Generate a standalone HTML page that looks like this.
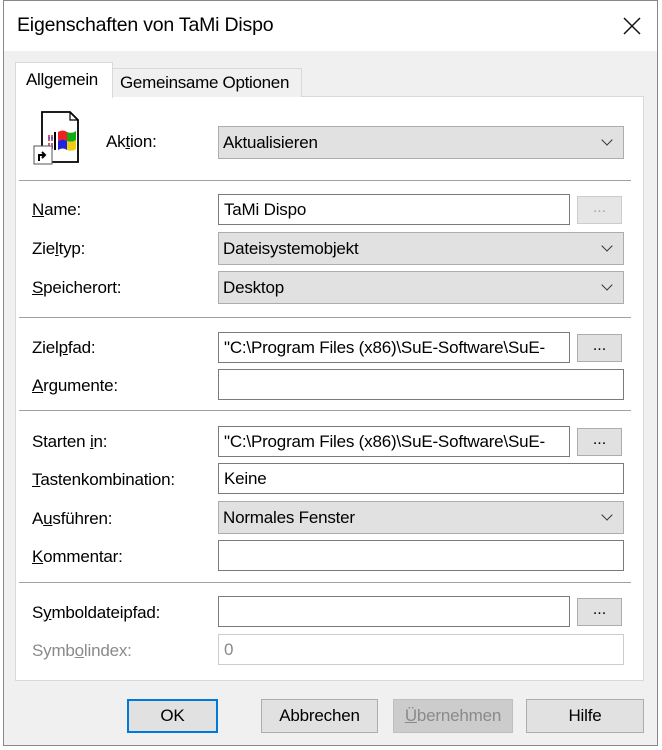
<!DOCTYPE html>
<html><head><meta charset="utf-8"><style>
*{box-sizing:border-box;margin:0;padding:0}
body{width:662px;height:750px;background:#fff;position:relative;overflow:hidden;font-family:"Liberation Sans",sans-serif;font-size:17px;color:#000}
.a{position:absolute}
.win{left:3px;top:0;width:655px;height:746px;border:1px solid #888;background:#f0f0f0}
.title{left:4px;top:1px;width:653px;height:50px;background:#fff}
.lbl{position:absolute;left:32px;font-size:17px;line-height:20px;letter-spacing:-0.2px}
.inp{position:absolute;left:218px;width:352px;height:31px;border:1px solid #7a7a7a;background:#fff;padding:5px 0 0 5px;white-space:nowrap;overflow:hidden;letter-spacing:-0.2px}
.cmb{position:absolute;left:218px;width:406px;height:33px;border:1px solid #adadad;background:#e1e1e1;padding:6px 0 0 4px;letter-spacing:-0.2px}
.cmb:after{content:"";position:absolute;right:12px;top:9px;width:7px;height:7px;border-right:1.5px solid #333;border-bottom:1.5px solid #333;transform:rotate(45deg)}
.dot{position:absolute;left:577px;width:45px;height:28px;border:1px solid #adadad;background:#e1e1e1;text-align:center;line-height:22px;font-size:16px}
.sep{position:absolute;left:19px;width:612px;height:2px;background:#a0a0a0;border-bottom:1px solid #fff}
.btn{position:absolute;top:699px;height:34px;border:1px solid #adadad;background:#e1e1e1;text-align:center;line-height:34px;letter-spacing:-0.2px}
u{text-decoration:underline}
</style></head><body>
<div class="a win"></div>
<div class="a title"></div>
<div class="a" style="left:17px;top:14px;font-size:19.5px;letter-spacing:-0.2px">Eigenschaften von TaMi Dispo</div>
<svg class="a" style="left:622px;top:16px" width="20" height="20"><path d="M2 2L18 18M18 2L2 18" stroke="#111" stroke-width="1.5"/></svg>
<div class="a" style="left:15px;top:96px;width:629px;height:585px;background:#fff;border:1px solid #d9d9d9"></div>
<div class="a" style="left:112px;top:68px;width:190px;height:29px;background:#f0f0f0;border:1px solid #d9d9d9;border-bottom:none;padding:4px 0 0 7px;letter-spacing:-0.3px">Gemeinsame Optionen</div>
<div class="a" style="left:15px;top:62px;width:98px;height:36px;background:#fff;border:1px solid #d9d9d9;border-bottom:none;padding:7px 0 0 10px;letter-spacing:-0.3px">Allgemein</div>
<svg class="a" style="left:32px;top:110px" width="50" height="56">
<path d="M10 2H38L46 10V52H10Z" fill="#fff" stroke="#000" stroke-width="1.8"/><path d="M38 2V10H46" fill="none" stroke="#000" stroke-width="1.2"/>
<path d="M26 22q5-3 9 0v9q-4-3-9 0z" fill="#e22"/><path d="M35 22q5 2 9-1v9q-4 3-9 1z" fill="#1a1"/>
<path d="M26 31q5-3 9 0v9q-4-3-9 0z" fill="#22d"/><path d="M35 31q5 2 9-1v9q-4 3-9 1z" fill="#ec1"/>
<path d="M23 22v18" stroke="#000" stroke-width="2"/>
<path d="M16 26h5M16 30h5M16 34h5M16 38h5" stroke="#c22" stroke-width="1.5" stroke-dasharray="2 1"/>
<path d="M16 28h5M16 36h5" stroke="#22d" stroke-width="1.5" stroke-dasharray="2 1"/>
<rect x="2" y="36" width="18" height="18" fill="#fff" stroke="#555"/><path d="M7 51V45h6M10 42l3 3-3 3" fill="none" stroke="#000" stroke-width="2"/>
</svg>
<div class="lbl" style="left:106px;top:132px">Ak<u>t</u>ion:</div>
<div class="cmb" style="top:126px">Aktualisieren</div>
<div class="sep" style="top:180px"></div>
<div class="lbl" style="top:200px"><u>N</u>ame:</div>
<div class="inp" style="top:194px">TaMi Dispo</div>
<div class="dot" style="top:196px;color:#aaa;border-color:#ccc;background:#e6e6e6">...</div>
<div class="lbl" style="top:239px">Zie<u>l</u>typ:</div>
<div class="cmb" style="top:232px">Dateisystemobjekt</div>
<div class="lbl" style="top:278px"><u>S</u>peicherort:</div>
<div class="cmb" style="top:271px">Desktop</div>
<div class="sep" style="top:317px"></div>
<div class="lbl" style="top:338px">Ziel<u>p</u>fad:</div>
<div class="inp" style="top:332px">"C:\Program Files (x86)\SuE-Software\SuE-</div>
<div class="dot" style="top:334px">...</div>
<div class="lbl" style="top:376px"><u>A</u>rgumente:</div>
<div class="inp" style="top:369px;width:406px"></div>
<div class="sep" style="top:410px"></div>
<div class="lbl" style="top:432px">Starten <u>i</u>n:</div>
<div class="inp" style="top:426px">"C:\Program Files (x86)\SuE-Software\SuE-</div>
<div class="dot" style="top:428px">...</div>
<div class="lbl" style="top:470px"><u>T</u>astenkombination:</div>
<div class="inp" style="top:463px;width:406px">Keine</div>
<div class="lbl" style="top:509px">A<u>u</u>sführen:</div>
<div class="cmb" style="top:501px">Normales Fenster</div>
<div class="lbl" style="top:547px"><u>K</u>ommentar:</div>
<div class="inp" style="top:540px;width:406px"></div>
<div class="sep" style="top:582px"></div>
<div class="lbl" style="top:603px">S<u>y</u>mboldateipfad:</div>
<div class="inp" style="top:596px"></div>
<div class="dot" style="top:598px">...</div>
<div class="lbl" style="top:641px;color:#8a8a8a">Symb<u>o</u>lindex:</div>
<div class="inp" style="top:634px;width:406px;border-color:#ccc;color:#8a8a8a">0</div>
<div class="btn" style="left:127px;width:91px;border:2px solid #0078d7;line-height:30px">OK</div>
<div class="btn" style="left:261px;width:117px;line-height:32px">Abbrechen</div>
<div class="btn" style="left:393px;width:120px;color:#8a8a8a;background:#ccc;border-color:#bfbfbf;line-height:32px"><u>Ü</u>bernehmen</div>
<div class="btn" style="left:526px;width:118px;line-height:32px">Hilfe</div>
</body></html>
